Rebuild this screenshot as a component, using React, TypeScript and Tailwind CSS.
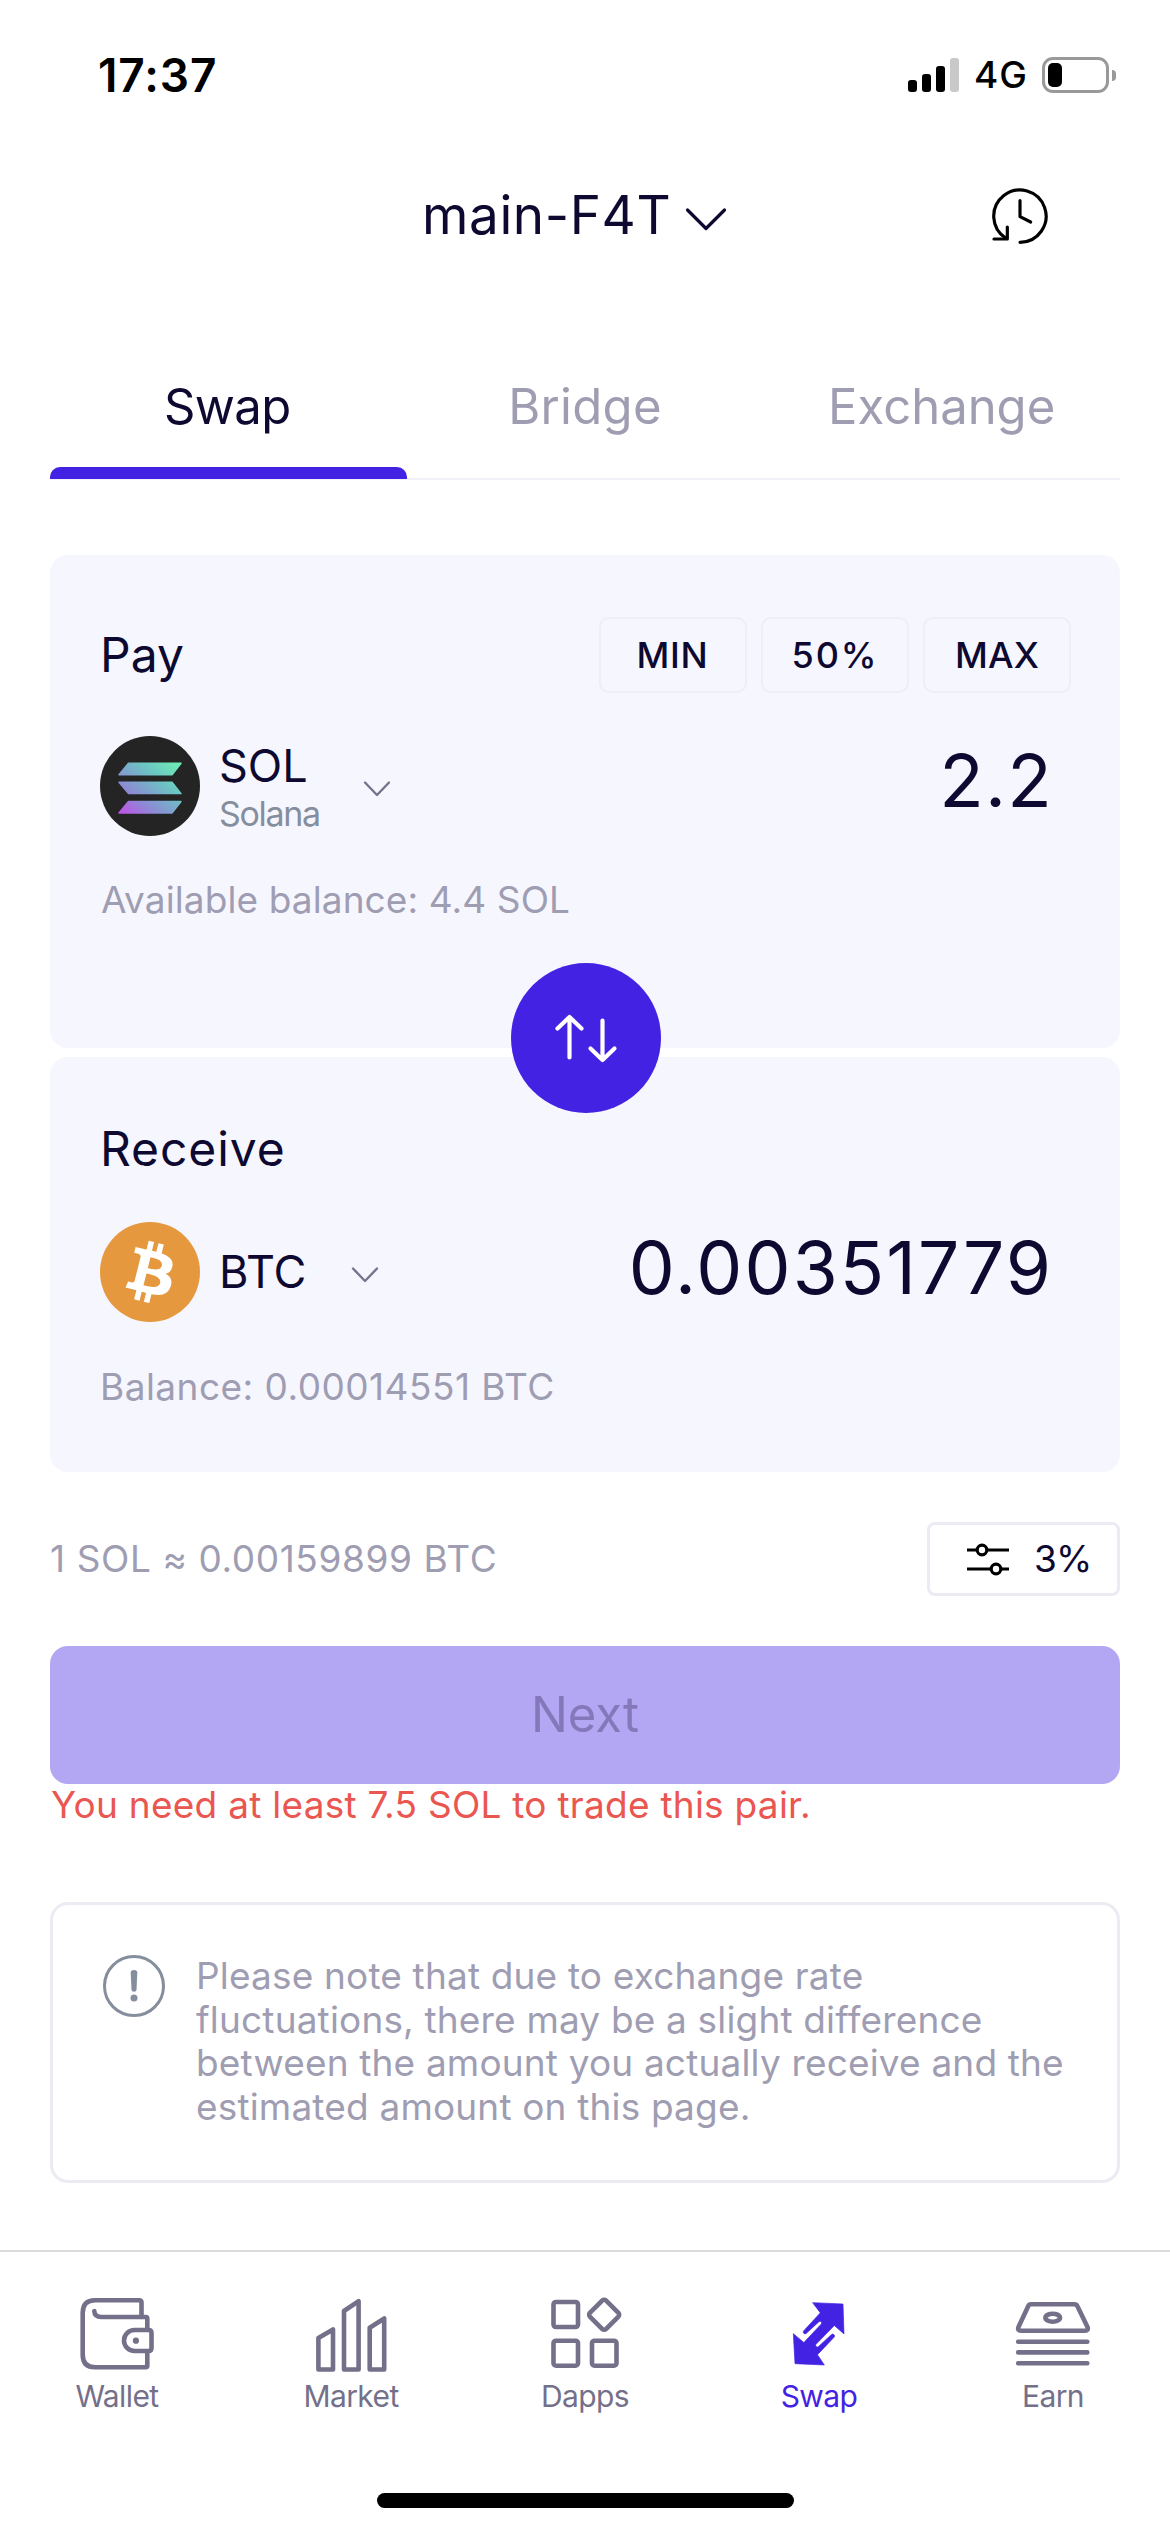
import type { ReactNode } from 'react';

function StatusBar() {
  return (
    <div className="flex h-[150px] items-center pr-[54px] pl-[98px]">
      <span className="text-[46px] leading-[56px] font-semibold tracking-[0.9px] text-black">17:37</span>
      <div className="ml-auto flex items-center">
        <div className="flex h-[34px] items-end gap-[5px]">
          <div className="h-3 w-[9px] rounded-[3px] bg-black" />
          <div className="h-[18px] w-[9px] rounded-[3px] bg-black" />
          <div className="h-[26px] w-[9px] rounded-[3px] bg-black" />
          <div className="h-[34px] w-[9px] rounded-[3px] bg-[#c9c9c9]" />
        </div>
        <span className="ml-[15px] text-[37px] leading-[44px] font-[450] tracking-[1px] text-black">4G</span>
        <div className="ml-[14px] flex h-[36px] w-[67px] rounded-[11px] border-[3px] border-[#999] p-[3px]">
          <div className="w-[14px] rounded-[5px] bg-black" />
        </div>
        <div className="ml-[3px] h-[11px] w-[4px] rounded-r-full bg-[#999]" />
      </div>
    </div>
  );
}

function Header() {
  return (
    <div className="flex h-[129px] items-center justify-between pr-[110px] pl-[422px]">
      <div className="flex items-center gap-[14px]">
        <span className="text-[53px] leading-[64px] tracking-[0.6px]">main-F4T</span>
        <svg className="mt-2 h-[24px] w-[42px]" viewBox="0 0 42 24" fill="none" stroke="currentColor" strokeWidth="3.2" strokeLinecap="round" strokeLinejoin="round">
          <path d="M2.5 3L21 21.500L39.500 3" />
        </svg>
      </div>
      <svg className="mt-[3px] h-[72px] w-[80px]" viewBox="0 0 240 216" fill="none" stroke="#000" strokeWidth="9.500" strokeLinecap="round" strokeLinejoin="round">
        <path d="M120 187A78.500 78.500 0 1 0 78 175" />
        <path d="M82 141V177H42" />
        <path d="M120 62V110L152 126" />
      </svg>
    </div>
  );
}

function Tabs() {
  return (
    <div className="mx-[50px] mt-14 grid h-[145px] grid-cols-3 border-b-2 border-[#f1f1f8] text-[49px]">
      <div className="relative flex items-center justify-center">
        <span className="mt-px mr-[2px] tracking-[-0.6px]">Swap</span>
        <div className="absolute inset-x-0 -bottom-px h-3 rounded-t-[10px] bg-[#4422e3]" />
      </div>
      <div className="flex items-center justify-center pt-px tracking-[0.3px] text-[#9f9db2]">Bridge</div>
      <div className="flex items-center justify-center pt-px text-[#9f9db2]">Exchange</div>
    </div>
  );
}

function SmallChevron({ className }: { className: string }) {
  return (
    <svg className={className} viewBox="0 0 28 18" fill="none" stroke="#77738c" strokeWidth="2.4" strokeLinecap="round" strokeLinejoin="round">
      <path d="M2 2.500L14 15L26 2.500" />
    </svg>
  );
}

function SolanaLogo() {
  return (
    <svg className="size-[100px] shrink-0" viewBox="0 0 100 100">
      <defs>
        <linearGradient id="sol" gradientUnits="userSpaceOnUse" x1="24" y1="82" x2="76" y2="20">
          <stop offset="0" stopColor="#c34fea" />
          <stop offset="0.3" stopColor="#8c8bd4" />
          <stop offset="0.65" stopColor="#6cc4c4" />
          <stop offset="1" stopColor="#6ff3b0" />
        </linearGradient>
      </defs>
      <circle cx="50" cy="50" r="50" fill="#242424" />
      <g fill="url(#sol)" stroke="url(#sol)" strokeWidth="1.500" strokeLinejoin="round">
        <path d="M28.500 27.200H81L72 38.800H19Z" />
        <path d="M19 46.300H72L81 57.600H28.500Z" />
        <path d="M28.500 65.500H81L72 77H19Z" />
      </g>
    </svg>
  );
}

function BitcoinLogo() {
  return (
    <svg className="size-[100px] shrink-0" viewBox="0 0 32 32">
      <circle cx="16" cy="16" r="16" fill="#e6983e" />
      <path
        fill="#fff"
        d="M23.189 14.02c.314-2.096-1.283-3.223-3.465-3.975l.708-2.84-1.728-.43-.69 2.765c-.454-.114-.92-.22-1.385-.326l.695-2.783L15.596 6l-.708 2.839c-.376-.086-.746-.17-1.104-.26l.002-.009-2.384-.595-.46 1.846s1.283.294 1.256.312c.7.175.826.638.805 1.006l-.806 3.235c.048.012.11.03.18.057l-.183-.045-1.13 4.532c-.086.212-.303.531-.793.41.018.025-1.256-.313-1.256-.313l-.858 1.978 2.25.561c.418.105.828.215 1.231.318l-.715 2.872 1.727.43.708-2.84c.472.127.93.245 1.378.357l-.706 2.828 1.728.43.715-2.866c2.948.558 5.164.333 6.097-2.333.752-2.146-.037-3.385-1.588-4.192 1.13-.26 1.98-1.003 2.207-2.538zm-3.95 5.538c-.533 2.147-4.148.986-5.32.695l.95-3.805c1.172.293 4.929.872 4.37 3.11zm.535-5.569c-.487 1.953-3.495.96-4.47.717l.86-3.45c.975.243 4.118.696 3.61 2.733z"
      />
    </svg>
  );
}

function AmountButton({ children }: { children: ReactNode }) {
  return (
    <button className="flex h-[76px] w-[148px] items-center justify-center rounded-[10px] border-2 border-[#eeeef8] text-[36px] font-[450]">
      {children}
    </button>
  );
}

function SwapCards() {
  return (
    <div className="relative mx-[50px] mt-[75px] flex flex-col gap-[9px]">
      <div className="h-[493px] rounded-[18px] bg-[#f6f6ff] pt-[62px] pr-[49px] pl-[50px]">
        <div className="flex h-[76px] items-center justify-between">
          <span className="text-[48px]">Pay</span>
          <div className="flex gap-[14px]">
            <AmountButton><span className="mr-px tracking-[0.7px]">MIN</span></AmountButton>
            <AmountButton><span className="tracking-[2px]">50%</span></AmountButton>
            <AmountButton><span className="tracking-[0.2px]">MAX</span></AmountButton>
          </div>
        </div>
        <div className="mt-[43px] flex h-[100px] items-center">
          <SolanaLogo />
          <div className="mt-[3px] ml-[19px] flex flex-col">
            <span className="text-[45px] leading-[52px]">SOL</span>
            <span className="text-[34px] leading-[44px] tracking-[-1.3px] text-[#858e9c]">Solana</span>
          </div>
          <SmallChevron className="mt-[5px] ml-[43px] h-[18px] w-[28px]" />
          <span className="mr-[18px] mb-[10px] ml-auto text-[73px] leading-[90px] tracking-[1.2px]">2.2</span>
        </div>
        <p className="mt-10 ml-px text-[37px] leading-[48px] tracking-[0.1px] text-[#9f9db2]">Available balance: 4.4 SOL</p>
      </div>

      <div className="h-[415px] rounded-[18px] bg-[#f6f6ff] pt-[68px] pr-[49px] pl-[50px]">
        <p className="text-[48px] leading-[48px] tracking-[0.9px]">Receive</p>
        <div className="mt-[49px] flex h-[100px] items-center">
          <BitcoinLogo />
          <span className="ml-[19px] text-[45px] leading-[52px]">BTC</span>
          <SmallChevron className="mt-[6px] ml-[45px] h-[18px] w-[28px]" />
          <span className="mr-[18px] mb-[9px] ml-auto text-[73px] leading-[90px] tracking-[2.1px]">0.00351779</span>
        </div>
        <p className="mt-[41px] text-[37px] leading-[48px] tracking-[0.47px] text-[#9f9db2]">Balance: 0.00014551 BTC</p>
      </div>

      <button className="absolute top-[408px] left-[461px] flex size-[150px] items-center justify-center rounded-full bg-[#4422e3]">
        <svg className="h-[54px] w-[68px]" viewBox="0 0 68 54" fill="none" stroke="#fff" strokeWidth="4.200" strokeLinecap="round" strokeLinejoin="round">
          <path d="M17.500 46.500V7M5.500 17.500L17.500 6L29.500 17.500" />
          <path d="M50.500 9.500V49M38.500 37.500L50.500 49L62.500 37.500" />
        </svg>
      </button>
    </div>
  );
}

function RateRow() {
  return (
    <div className="mx-[50px] mt-[50px] flex h-[74px] items-center justify-between">
      <span className="text-[37px] tracking-[0.6px] text-[#9f9db2]">1 SOL ≈ 0.00159899 BTC</span>
      <button className="flex h-[74px] w-[193px] items-center rounded-[8px] border-[3px] border-[#ebebf4] pl-[36px]">
        <svg className="mt-[2px] h-[36px] w-[44px]" viewBox="0 0 44 36" fill="none" stroke="#000" strokeWidth="3.200">
          <path d="M1 8H11M21 8H43M1 27H25M35 27H43" />
          <circle cx="16" cy="8" r="4.800" />
          <circle cx="30" cy="27" r="4.800" />
        </svg>
        <span className="ml-[24px] text-[37px] tracking-[-0.8px]">3%</span>
      </button>
    </div>
  );
}

function Notice() {
  return (
    <div className="mx-[50px] mt-[76px] flex h-[281px] rounded-[18px] border-[3px] border-[#ebebf4] pt-[49px] pl-[50px]">
      <svg className="mt-px size-[62px] shrink-0" viewBox="0 0 62 62">
        <circle cx="31" cy="31" r="29.500" fill="none" stroke="#858e9c" strokeWidth="3" />
        <path d="M27.700 17.500Q27.700 15 31 15T34.300 17.500L33.500 35Q33.300 36.800 31 36.800T28.500 35Z" fill="#858e9c" />
        <circle cx="31" cy="43" r="3.500" fill="#858e9c" />
      </svg>
      <p className="ml-[31px] w-[872px] text-[37px] leading-[43.700px] tracking-[0.17px] text-[#9f9db2]">
        Please note that due to exchange rate fluctuations, there may be a slight difference between the amount you actually receive and the estimated amount on this page.
      </p>
    </div>
  );
}

function NavItem({ label, active, children }: { label: string; active?: boolean; children: ReactNode }) {
  return (
    <div className={active ? 'flex flex-col items-center text-[#4422e3]' : 'flex flex-col items-center text-[#74708a]'}>
      <svg className="h-[80px] w-[90px]" viewBox="0 0 90 80" fill="none" stroke="currentColor" strokeWidth="4.600" strokeLinecap="round" strokeLinejoin="round">
        {children}
      </svg>
      <span className="mt-px text-[30px] leading-[40px] tracking-[-0.6px]">{label}</span>
    </div>
  );
}

function BottomNav() {
  return (
    <nav className="mt-[67px] border-t-2 border-[#dadada] pt-[43px]">
      <div className="grid grid-cols-5">
        <NavItem label="Wallet">
          <path d="M75.300 34.500V23.500Q75.300 22 73.800 22H29.500Q22.500 22 22.300 16" />
          <path d="M69.500 22V7.300Q69.500 5.300 67.500 5.300H23Q10.700 5.300 10.700 18V59.500Q10.700 72.300 23 72.300H73.800Q75.300 72.300 75.300 70.800V56.500" />
          <path d="M79.500 38V53Q79.500 56 76.500 56H62.500A10.500 10.500 0 0 1 62.500 35H76.500Q79.500 35 79.500 38Z" />
          <circle cx="63.900" cy="45.700" r="3.100" fill="currentColor" stroke="none" />
        </NavItem>
        <NavItem label="Market">
          <path d="M12.400 43L27 34.500V74.500H12.400Z" />
          <path d="M38 16L52.600 6.200V74.500H38Z" />
          <path d="M63.700 32.700L78.200 23.500V74.500H63.700Z" />
        </NavItem>
        <NavItem label="Dapps">
          <rect x="13.500" y="7" width="24.500" height="25" rx="2.500" />
          <rect x="13.500" y="45.700" width="24.500" height="25" rx="2.500" />
          <rect x="52" y="45.700" width="24.500" height="25" rx="2.500" />
          <rect x="52.800" y="8.400" width="22.700" height="22.700" rx="2.500" transform="rotate(45 64.150 19.750)" />
        </NavItem>
        <NavItem label="Swap" active>
          <path
            transform="translate(6 -5) scale(0.33333)"
            fill="currentColor"
            strokeWidth="2"
            d="M98.500 38L189 42L192 132L163 106.500L108 163A5 5 0 0 0 115 170L154 134A5 5 0 0 1 162 142L112.500 194L133 225L45 221L40 131L71.500 157.500L124 102A5 5 0 0 0 117 95L79 130A5 5 0 0 1 71.500 122L120.500 69Z"
          />
        </NavItem>
        <NavItem label="Earn">
          <path d="M23 9.200H66.500Q68.500 9.200 69.300 11L79.500 32Q80.800 35.700 77 35.700H13Q9.200 35.700 10.500 32L20.300 11Q21 9.200 23 9.200Z" />
          <ellipse cx="44.700" cy="22.700" rx="7.300" ry="4" />
          <path d="M10.200 46.700H79.300M10.200 57.400H79.300M10.200 68.300H79.300" />
        </NavItem>
      </div>
      <div className="mx-auto mt-[77px] h-[15px] w-[417px] rounded-full bg-black" />
    </nav>
  );
}

export default function App() {
  return (
    <main className="h-[2532px] w-[1170px] overflow-hidden bg-white font-['Inter',sans-serif] text-[#0d0930]">
      <StatusBar />
      <Header />
      <Tabs />
      <SwapCards />
      <RateRow />
      <button className="mx-[50px] mt-[50px] flex h-[138px] w-[1070px] items-center justify-center rounded-[18px] bg-[#b3a6f3] text-[49px] text-[#8578ba]">
        Next
      </button>
      <p className="mx-[51px] text-[37px] leading-[42px] tracking-[0.26px] text-[#ea5650]">You need at least 7.5 SOL to trade this pair.</p>
      <Notice />
      <BottomNav />
    </main>
  );
}
